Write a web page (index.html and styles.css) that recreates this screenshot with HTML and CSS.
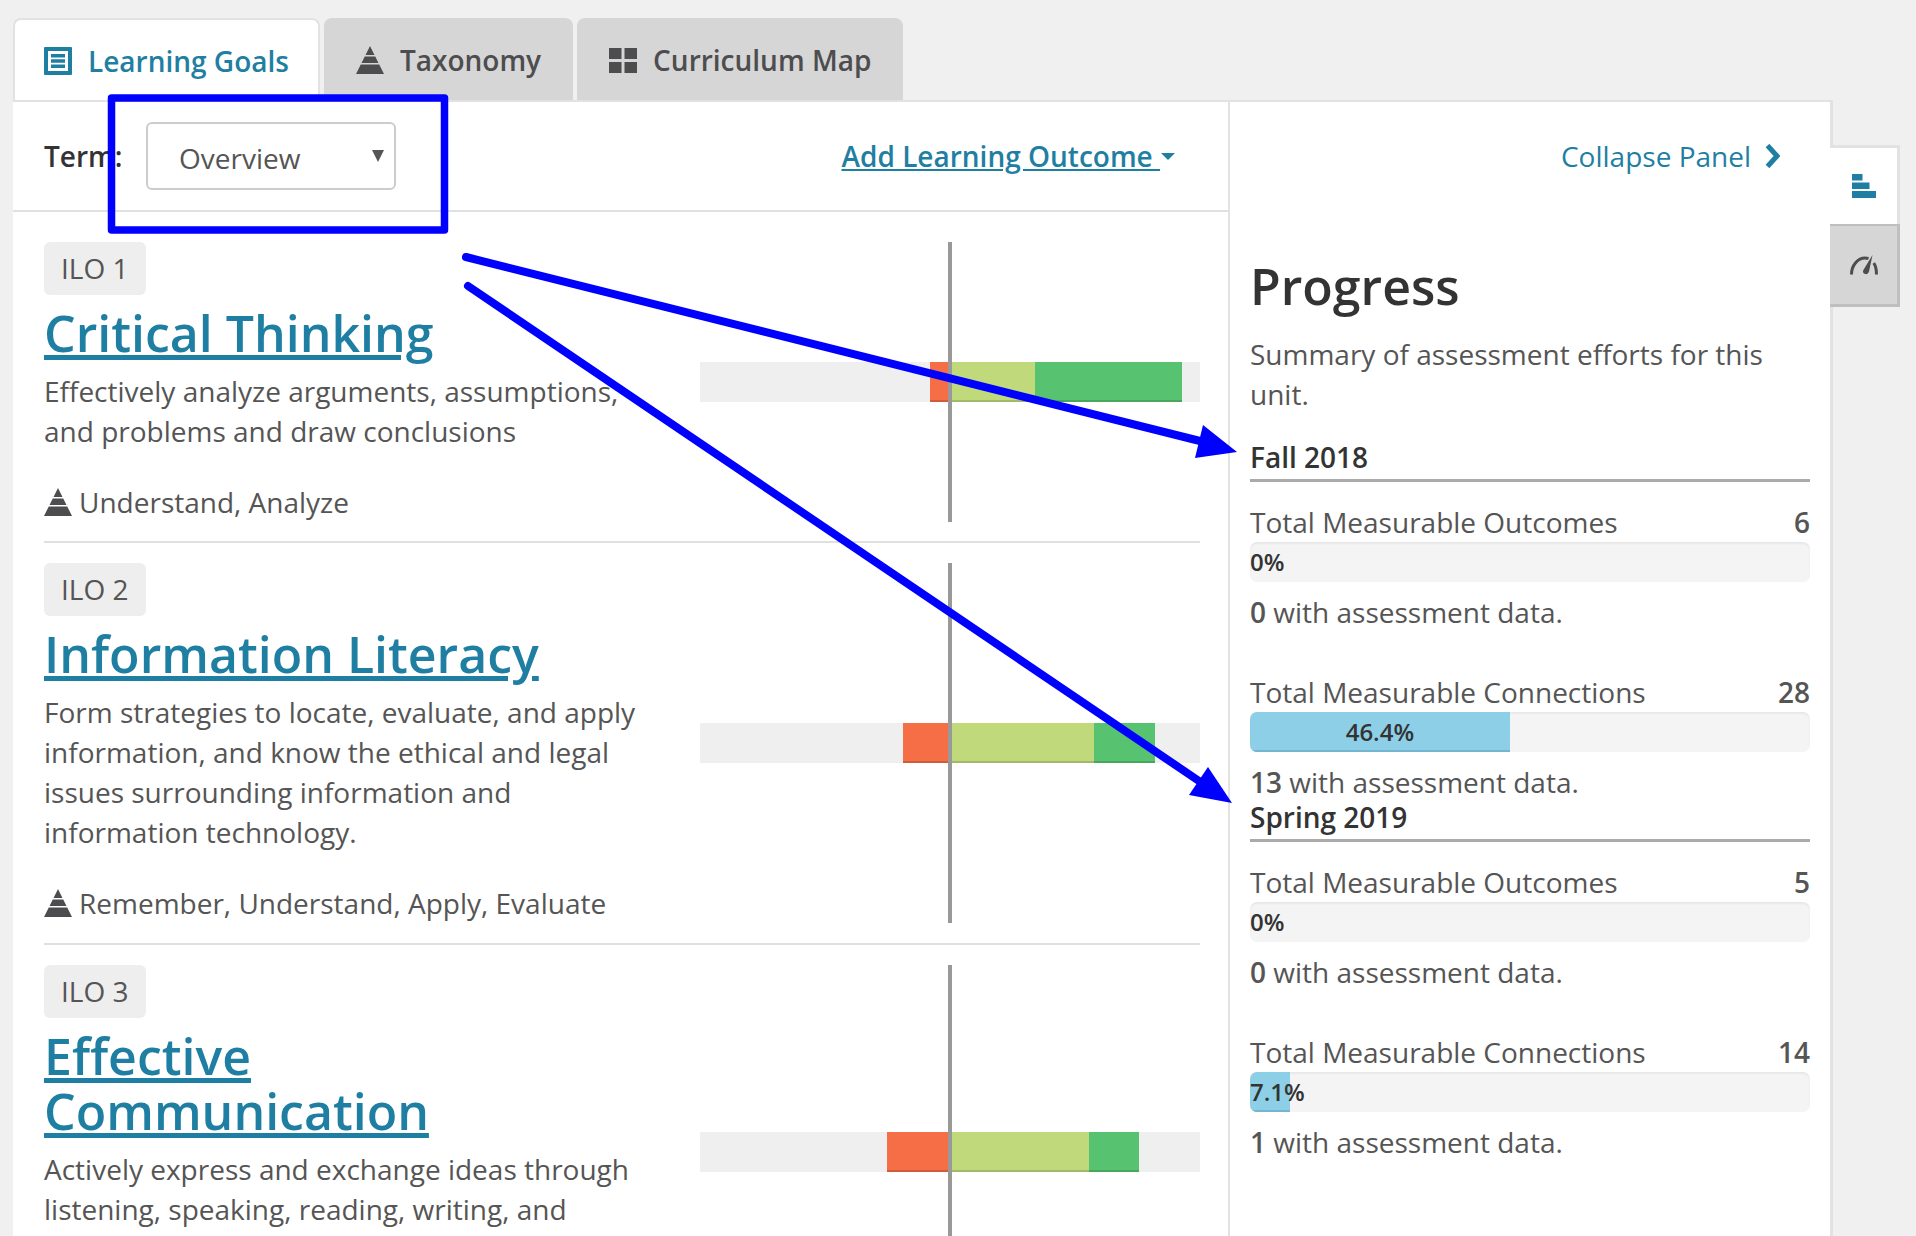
FILE: index.html
```html
<!DOCTYPE html>
<html lang="en">
<head>
  <meta charset="UTF-8" />
  <title>Learning Goals</title>
  <link rel="stylesheet" href="styles.css">
</head>
<body>

  <!-- Tabs -->
  <div class="tabs">
    <div class="tab active">
      <svg class="tab-icon" viewBox="0 0 28 28"><path fill-rule="evenodd" d="M1 0h26a1 1 0 0 1 1 1v26a1 1 0 0 1-1 1H1a1 1 0 0 1-1-1V1a1 1 0 0 1 1-1zM4 4v20h20V4zM7 7h14v3.500H7zM7 12.300h14v3.500H7zM7 17.600h14v3.500H7z"/></svg>
      Learning Goals
    </div>
    <div class="tab">
      <svg class="tab-icon" viewBox="0 0 28 28"><path d="M14 0l4.500 9h-9zM8.750 10.500h10.500L22.500 17h-17zM4.750 18.500h18.500L28 28H0z"/></svg>
      Taxonomy
    </div>
    <div class="tab">
      <svg class="tab-icon" viewBox="0 0 28 28"><path d="M0 2h12.500v11H0zM15.500 2H28v11H15.500zM0 16h12.500v11H0zM15.500 16H28v11H15.500z"/></svg>
      Curriculum Map
    </div>
  </div>

  <div class="layout">
    <!-- Main Panel -->
    <div class="main-panel">
      <div class="toolbar">
        <label class="term-label">Term:</label>
        <div class="term-select">Overview<span class="select-arrow"></span></div>
        <a class="add-link"><span class="add-link-text">Add Learning Outcome </span><span class="caret"></span></a>
      </div>

      <div class="outcome">
        <div class="outcome-text">
          <span class="badge">ILO 1</span>
          <h2 class="outcome-title"><a>Critical Thinking</a></h2>
          <p class="outcome-desc">Effectively analyze arguments, assumptions, and problems and draw conclusions</p>
          <div class="levels">
            <svg class="pyramid" viewBox="0 0 28 28"><path d="M14 0l4.500 9h-9zM8.750 10.500h10.500L22.500 17h-17zM4.750 18.500h18.500L28 28H0z"/></svg>
            Understand, Analyze
          </div>
        </div>
        <div class="outcome-chart">
          <div class="chart-track">
            <div class="seg seg-red" style="left: 230px; width: 18px"></div>
            <div class="seg seg-lime" style="left: 248px; width: 87px"></div>
            <div class="seg seg-green" style="left: 335px; width: 147px"></div>
          </div>
        </div>
      </div>

      <div class="outcome">
        <div class="outcome-text">
          <span class="badge">ILO 2</span>
          <h2 class="outcome-title"><a>Information Literacy</a></h2>
          <p class="outcome-desc">Form strategies to locate, evaluate, and apply information, and know the ethical and legal issues surrounding information and information technology.</p>
          <div class="levels">
            <svg class="pyramid" viewBox="0 0 28 28"><path d="M14 0l4.500 9h-9zM8.750 10.500h10.500L22.500 17h-17zM4.750 18.500h18.500L28 28H0z"/></svg>
            Remember, Understand, Apply, Evaluate
          </div>
        </div>
        <div class="outcome-chart">
          <div class="chart-track">
            <div class="seg seg-red" style="left: 203px; width: 45px"></div>
            <div class="seg seg-lime" style="left: 248px; width: 146px"></div>
            <div class="seg seg-green" style="left: 394px; width: 61px"></div>
          </div>
        </div>
      </div>

      <div class="outcome outcome-cut">
        <div class="outcome-text">
          <span class="badge">ILO 3</span>
          <h2 class="outcome-title"><a>Effective Communication</a></h2>
          <p class="outcome-desc">Actively express and exchange ideas through listening, speaking, reading, writing, and</p>
        </div>
        <div class="outcome-chart">
          <div class="chart-track">
            <div class="seg seg-red" style="left: 187px; width: 61px"></div>
            <div class="seg seg-lime" style="left: 248px; width: 141px"></div>
            <div class="seg seg-green" style="left: 389px; width: 50px"></div>
          </div>
        </div>
      </div>
    </div>

    <!-- Progress Panel -->
    <div class="progress-panel">
      <a class="collapse-link">Collapse Panel
        <svg class="chevron" viewBox="0 0 16 24"><path d="M3.500 1.500L13 12l-9.500 10.500" fill="none" stroke="#1f7fa3" stroke-width="5"/></svg>
      </a>
      <h1 class="progress-title">Progress</h1>
      <p class="progress-intro">Summary of assessment efforts for this unit.</p>

      <div class="term-block">
        <h3 class="term-name">Fall 2018</h3>
        <div class="stat">
          <div class="stat-head"><span>Total Measurable Outcomes</span><span class="stat-count">6</span></div>
          <div class="stat-bar"><span class="stat-zero">0%</span></div>
          <p class="stat-note"><b>0</b> with assessment data.</p>
        </div>
        <div class="stat">
          <div class="stat-head"><span>Total Measurable Connections</span><span class="stat-count">28</span></div>
          <div class="stat-bar"><div class="stat-fill" style="width: 46.4%">46.4%</div></div>
          <p class="stat-note"><b>13</b> with assessment data.</p>
        </div>
      </div>

      <div class="term-block">
        <h3 class="term-name">Spring 2019</h3>
        <div class="stat">
          <div class="stat-head"><span>Total Measurable Outcomes</span><span class="stat-count">5</span></div>
          <div class="stat-bar"><span class="stat-zero">0%</span></div>
          <p class="stat-note"><b>0</b> with assessment data.</p>
        </div>
        <div class="stat">
          <div class="stat-head"><span>Total Measurable Connections</span><span class="stat-count">14</span></div>
          <div class="stat-bar"><div class="stat-fill stat-fill-small" style="width: 7.1%">7.1%</div></div>
          <p class="stat-note"><b>1</b> with assessment data.</p>
        </div>
      </div>
    </div>

    <!-- Side Tabs -->
    <div class="side-tabs">
      <div class="side-tab active">
        <svg class="side-icon" viewBox="0 0 24 24"><path d="M0 0h10.500v6.500H0zM0 8.500h17.500V15H0zM0 17h24v7H0z"/></svg>
      </div>
      <div class="side-tab">
        <svg class="side-icon gauge" viewBox="0 0 28 20"><path d="M1.500 19.500C1.500 10 8 3 15 3c1.300 0 2.500.2 3.500.5" fill="none" stroke="#4d4d4f" stroke-width="3"/><path d="M23.800 8c1.800 2.800 2.700 7 2.700 11.500" fill="none" stroke="#4d4d4f" stroke-width="3"/><path d="M22.500 0l-3.500 16.500c-.6 2-2.200 3-3.800 2.500-2-.5-2.800-2.300-1.800-4z" fill="#4d4d4f"/></svg>
      </div>
    </div>
  </div>

  <!-- Blue markup drawn on top of the screenshot -->
  <svg class="markup" viewBox="0 0 1916 1236">
    <rect x="111.500" y="98" width="333" height="132" fill="none" stroke="#00f" stroke-width="7.500" stroke-linejoin="round"/>
    <path d="M466 257L1200 441" stroke="#00f" stroke-width="8" stroke-linecap="round"/>
    <path d="M1203 425L1237 452 1195 458z" fill="#00f"/>
    <path d="M468 286L1199 781" stroke="#00f" stroke-width="8" stroke-linecap="round"/>
    <path d="M1208 767L1232 803 1189 795z" fill="#00f"/>
  </svg>

</body>
</html>
```

FILE: styles.css
```css
* {
  margin: 0;
  padding: 0;
  box-sizing: border-box;
}

body {
  font-family: "Open Sans", sans-serif;
  font-size: 28px;
  line-height: 40px;
  color: #555;
  background: #f0f0f0;
  height: 1236px;
  overflow: hidden;
  padding: 18px 0 0 13px;
  position: relative;
}

a {
  color: #1f7fa3;
}

/* Tabs */
.tabs {
  display: flex;
  gap: 4px;
  height: 82px;
}

.tab {
  display: flex;
  align-items: center;
  gap: 16px;
  padding: 2px 32px 0;
  background: #d6d6d6;
  color: #4d4d4f;
  font-weight: 600;
  border-radius: 8px 8px 0 0;
}

.tab.active {
  background: #fff;
  color: #1f7fa3;
  border: 2px solid #e2e2e2;
  border-bottom: 0;
  padding: 2px 29px 0;
}

.tab-icon {
  width: 28px;
  height: 28px;
  fill: currentColor;
}

/* Main Panel */
.layout {
  display: flex;
  align-items: flex-start;
}

.main-panel {
  width: 1217px;
  height: 1136px;
  overflow: hidden;
  background: #fff;
  border-top: 2px solid #e2e2e2;
  border-right: 2px solid #e2e2e2;
}

.toolbar {
  display: flex;
  align-items: center;
  height: 110px;
  padding: 0 53px 0 31px;
  border-bottom: 2px solid #e0e0e0;
}

.term-label {
  color: #333;
  font-weight: 600;
  width: 102px;
}

.term-select {
  position: relative;
  width: 250px;
  height: 68px;
  padding: 0 31px;
  line-height: 68px;
  border: 2px solid #ccc;
  border-radius: 6px;
}

.select-arrow {
  position: absolute;
  right: 10px;
  top: 26px;
  border-left: 6px solid transparent;
  border-right: 6px solid transparent;
  border-top: 12px solid #555;
}

.add-link {
  margin-left: auto;
  display: flex;
  align-items: center;
  font-weight: 600;
}

.add-link-text {
  text-decoration: underline;
  white-space: pre;
}

.caret {
  border-left: 7px solid transparent;
  border-right: 7px solid transparent;
  border-top: 7px solid #1f7fa3;
  margin-left: 1px;
}

.outcome {
  display: flex;
  align-items: stretch;
  margin: 0 28px 0 31px;
  padding: 30px 0 19px;
  border-bottom: 2px solid #e0e0e0;
}

.outcome + .outcome {
  padding-top: 20px;
  padding-bottom: 20px;
}

.outcome-cut {
  height: 413px;
  flex-shrink: 0;
  border-bottom: 0;
}

.outcome-text {
  width: 656px;
  padding-right: 56px;
}

.badge {
  display: inline-block;
  height: 53px;
  line-height: 53px;
  padding: 0 17px;
  background: #eee;
  border-radius: 6px;
  vertical-align: top;
}

.outcome-title {
  font-size: 50px;
  line-height: 55px;
  font-weight: 600;
  margin-top: 11px;
}

.outcome-title a {
  text-decoration: underline;
  text-decoration-thickness: 5px;
}

.outcome-desc {
  margin-top: 10px;
}

.levels {
  display: flex;
  align-items: center;
  gap: 7px;
  margin-top: 31px;
}

.pyramid {
  width: 28px;
  height: 28px;
  fill: #4d4d4f;
}

.outcome-chart {
  position: relative;
  flex: 1;
  display: flex;
  align-items: center;
}

.outcome-chart::after {
  content: "";
  position: absolute;
  left: 248px;
  top: 0;
  bottom: 0;
  width: 4px;
  background: #999;
}

.chart-track {
  position: relative;
  width: 100%;
  height: 40px;
  background: #efefef;
}

.seg {
  position: absolute;
  top: 0;
  bottom: 0;
  border-bottom: 2px solid rgba(0, 0, 0, 0.15);
}

.seg-red { background: #f56e45; }
.seg-lime { background: #c0d97b; }
.seg-green { background: #57c26f; }

/* Progress Panel */
.progress-panel {
  width: 603px;
  height: 1136px;
  background: #fff;
  border-top: 2px solid #e2e2e2;
  border-right: 3px solid #e2e2e2;
  padding: 0 20px;
}

.collapse-link {
  display: flex;
  justify-content: flex-end;
  align-items: center;
  gap: 13px;
  height: 40px;
  margin: 34px 30px 0 0;
}

.chevron {
  width: 16px;
  height: 24px;
}

.progress-title {
  font-size: 50px;
  line-height: 60px;
  font-weight: 600;
  color: #333;
  margin-top: 80px;
}

.progress-intro {
  margin-top: 18px;
}

.term-block {
  margin-top: 23px;
}

.term-block + .term-block {
  margin-top: 0;
}

.term-name {
  font-size: 28px;
  line-height: 40px;
  font-weight: 600;
  color: #333;
  height: 45px;
  border-bottom: 3px solid #aaa;
  margin-bottom: 20px;
}

.stat {
  margin-bottom: 40px;
}

.stat:last-child {
  margin-bottom: -5px;
}

.stat-head {
  display: flex;
  justify-content: space-between;
}

.stat-count {
  font-weight: 600;
}

.stat-bar {
  height: 40px;
  margin-bottom: 10px;
  background: #f4f4f4;
  border-radius: 7px;
  box-shadow: inset 0 2px 2px rgba(0, 0, 0, 0.05);
  overflow: hidden;
  font-size: 24px;
  font-weight: 600;
  color: #333;
  line-height: 40px;
}

.stat-fill {
  height: 100%;
  background: #8ecfe8;
  border-bottom: 2px solid #75b5cf;
  text-align: center;
  white-space: nowrap;
}

.stat-fill-small {
  text-align: left;
}

.stat-note b {
  font-weight: 600;
}

/* Side Tabs */
.side-tabs {
  margin-top: 45px;
  margin-left: -3px;
  width: 70px;
}

.side-tab {
  display: flex;
  align-items: center;
  justify-content: center;
  height: 83px;
  background: #d6d6d6;
  border-right: 3px solid #bfbfbf;
  border-bottom: 3px solid #bfbfbf;
  border-top: 2px solid #bfbfbf;
}

.side-tab.active {
  height: 79px;
  background: #fff;
  border-top: 3px solid #e2e2e2;
  border-right: 3px solid #e2e2e2;
  border-bottom: 0;
}

.side-icon {
  width: 24px;
  height: 24px;
  fill: #1f7fa3;
}

.gauge {
  width: 28px;
  height: 20px;
}

/* Markup overlay */
.markup {
  position: absolute;
  left: 0;
  top: 0;
  width: 1916px;
  height: 1236px;
  pointer-events: none;
}
```
